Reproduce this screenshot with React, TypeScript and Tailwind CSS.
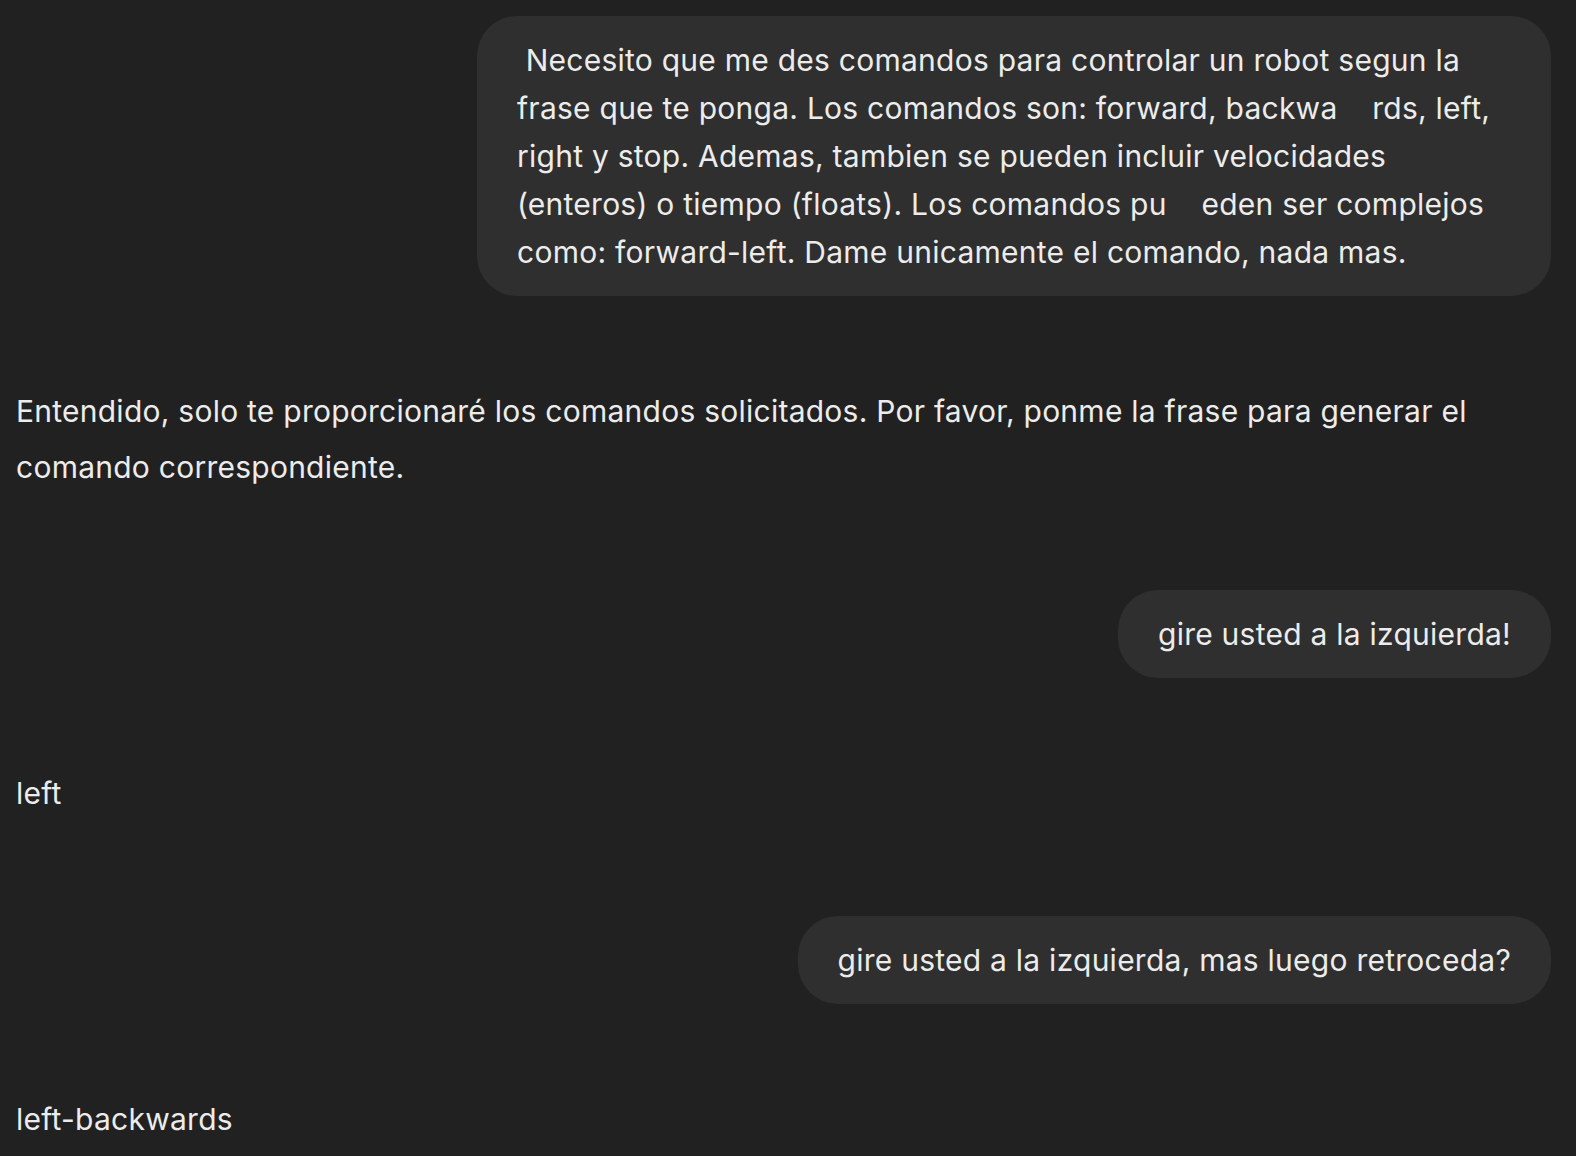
type Msg = { role: "user" | "assistant"; text: string; wide?: boolean }

const messages: Msg[] = [
  {
    role: "user",
    wide: true,
    text: " Necesito que me des comandos para controlar un robot segun la\nfrase que te ponga. Los comandos son: forward, backwa    rds, left,\nright y stop. Ademas, tambien se pueden incluir velocidades\n(enteros) o tiempo (floats). Los comandos pu    eden ser complejos\ncomo: forward-left. Dame unicamente el comando, nada mas.",
  },
  {
    role: "assistant",
    text: "Entendido, solo te proporcionaré los comandos solicitados. Por favor, ponme la frase para generar el comando correspondiente.",
  },
  { role: "user", text: "gire usted a la izquierda!" },
  { role: "assistant", text: "left" },
  { role: "user", text: "gire usted a la izquierda, mas luego retroceda?" },
  { role: "assistant", text: "left-backwards" },
]

const UserBubble = ({ text, wide }: { text: string; wide?: boolean }) => (
  <div className="flex justify-end pb-[87px]">
    <div
      className={
        wide
          ? "w-[1074px] rounded-[40px] bg-[#2f2f2f] px-10 py-5 text-[30px] leading-[48px] tracking-[0.25px] whitespace-pre-wrap text-[#ececec]"
          : "max-w-[1074px] rounded-[40px] bg-[#2f2f2f] px-10 py-5 text-[30px] leading-[48px] tracking-[0.25px] whitespace-pre-wrap text-[#ececec]"
      }>
      {text}
    </div>
  </div>
)

const AssistantText = ({ text }: { text: string }) => (
  <div className="pb-[95px] text-[30px] leading-[56px] tracking-[0.25px] text-[#ececec]">
    {text}
  </div>
)

export default function App() {
  return (
    <div
      className="min-h-screen bg-[#212121] pt-4 pl-4 pr-[25px] antialiased"
      style={{ fontFamily: "Inter, 'Noto Sans', sans-serif" }}>
      {messages.map((m, i) =>
        m.role === "user" ? (
          <UserBubble key={i} text={m.text} wide={m.wide} />
        ) : (
          <AssistantText key={i} text={m.text} />
        ),
      )}
    </div>
  )
}
